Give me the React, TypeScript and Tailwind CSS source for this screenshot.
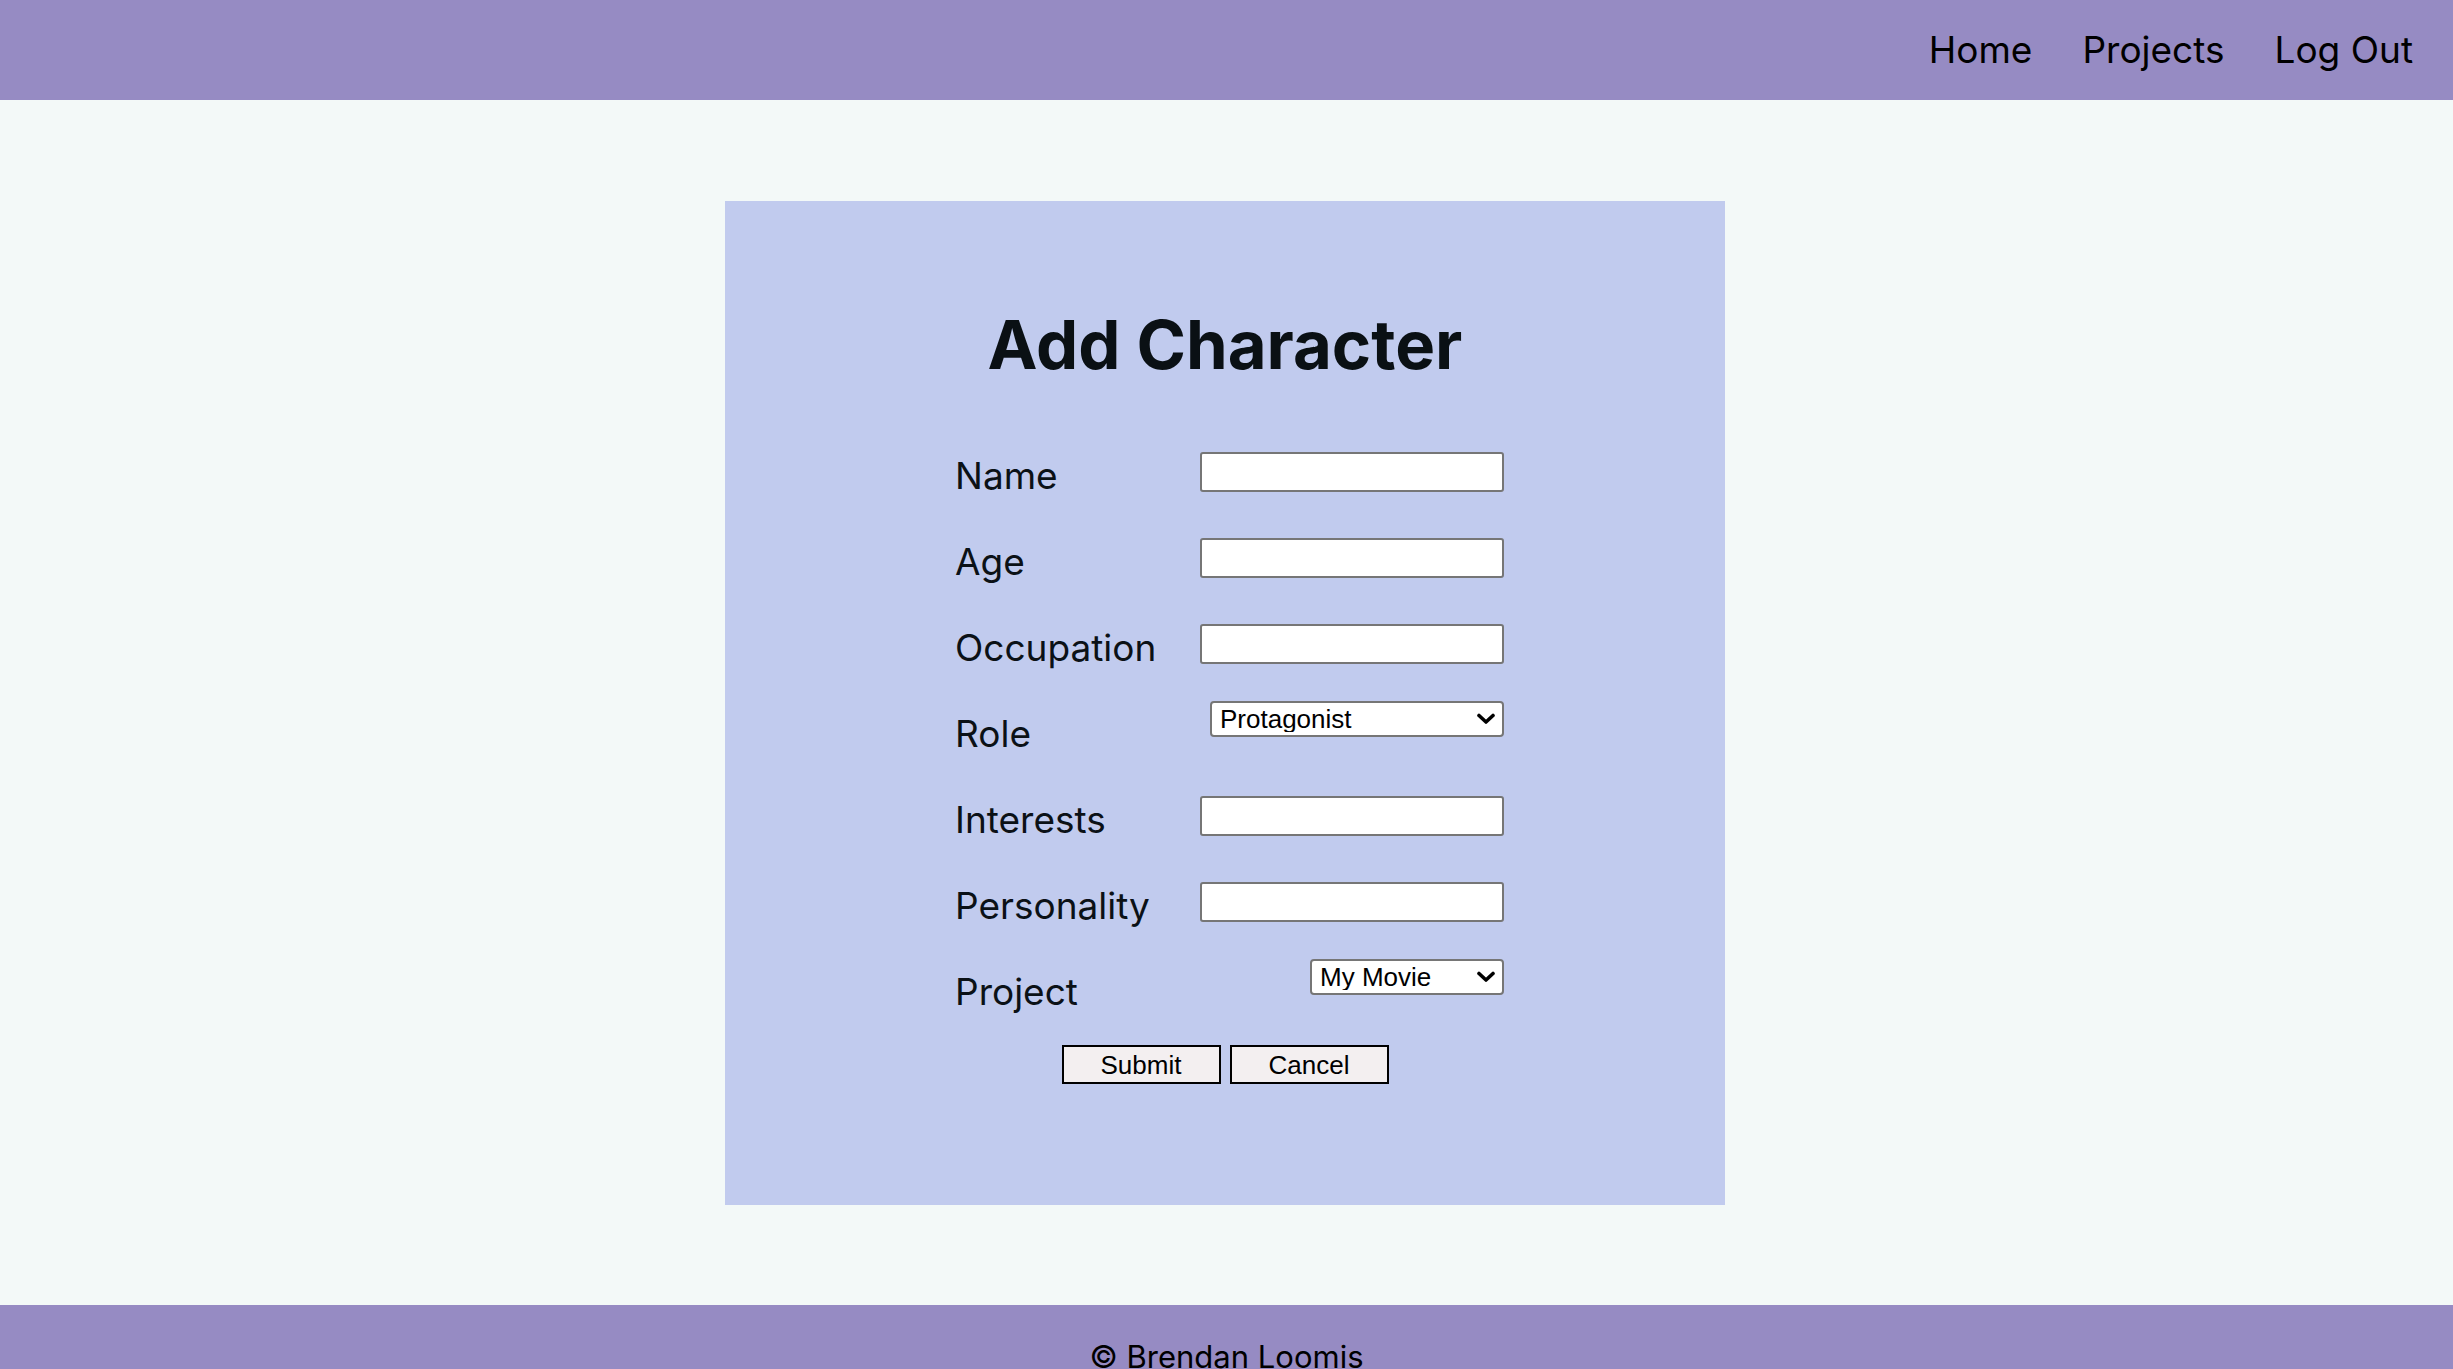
import React from "react";

const inter = { fontFamily: "Inter, 'Noto Sans', sans-serif" };

function Chevron() {
  return (
    <svg
      className="pointer-events-none absolute right-[9px] top-1/2 -translate-y-1/2"
      width="18"
      height="12"
      viewBox="0 0 18 12"
      fill="none"
    >
      <path d="M2 2.5 L9 9 L16 2.5" stroke="#000" strokeWidth="3.6" strokeLinecap="round" strokeLinejoin="round" />
    </svg>
  );
}

function Select({ value, width }: { value: string; width: string }) {
  return (
    <div className={`relative ${width} h-[36px]`}>
      <select
        defaultValue={value}
        className="h-full w-full appearance-none rounded-[4px] border-2 border-[#767676] bg-white pl-[8px] text-[26px] leading-none text-black outline-none font-['Liberation_Sans',Arial,sans-serif]"
      >
        <option>{value}</option>
      </select>
      <Chevron />
    </div>
  );
}

function Row({ label, children, inputTop }: { label: string; children: React.ReactNode; inputTop: boolean }) {
  return (
    <div className="flex h-[86px] items-start justify-between">
      <label className="mt-[14px] text-[37px] leading-none text-[#0b1116]" style={inter}>
        {label}
      </label>
      <div className={inputTop ? "mt-[9px]" : "mt-0"}>{children}</div>
    </div>
  );
}

function TextInput() {
  return (
    <input
      type="text"
      className="block h-[40px] w-[304px] rounded-[3px] border-2 border-[#767676] bg-white px-2 text-[26px] outline-none"
    />
  );
}

export default function App() {
  return (
    <div className="min-h-screen bg-[#f3f9f8]" style={inter}>
      <header className="flex h-[100px] items-center justify-end gap-[50px] bg-[#968bc3] pr-[40px]">
        <a className="-mt-[2px] text-[37px] leading-none text-black">Home</a>
        <a className="-mt-[2px] text-[37px] leading-none text-black">Projects</a>
        <a className="-mt-[2px] text-[37px] leading-none text-black">Log Out</a>
      </header>

      <main className="flex justify-center pt-[101px] pb-[100px]">
        <div className="-ml-[3px] flex h-[1004px] w-[1000px] flex-col bg-[#c1cbee]">
          <h1 className="mt-[110px] text-center text-[67px] font-bold leading-none text-[#0a1014]">
            Add Character
          </h1>
          <form className="ml-[230px] mt-[65px] w-[549px]" onSubmit={(e) => e.preventDefault()}>
            <Row label="Name" inputTop>
              <TextInput />
            </Row>
            <Row label="Age" inputTop>
              <TextInput />
            </Row>
            <Row label="Occupation" inputTop>
              <TextInput />
            </Row>
            <Row label="Role" inputTop={false}>
              <Select value="Protagonist" width="w-[294px]" />
            </Row>
            <Row label="Interests" inputTop>
              <TextInput />
            </Row>
            <Row label="Personality" inputTop>
              <TextInput />
            </Row>
            <Row label="Project" inputTop={false}>
              <Select value="My Movie" width="w-[194px]" />
            </Row>
          </form>
          <div className="flex justify-center gap-[9px]">
            <button className="h-[39px] w-[159px] border-2 border-black bg-[#f3eff0] text-[26px] leading-none text-black font-['Liberation_Sans',Arial,sans-serif]">
              Submit
            </button>
            <button className="h-[39px] w-[159px] border-2 border-black bg-[#f3eff0] text-[26px] leading-none text-black font-['Liberation_Sans',Arial,sans-serif]">
              Cancel
            </button>
          </div>
        </div>
      </main>

      <footer className="h-[100px] bg-[#968bc3] pt-[29px] text-center text-[31px] text-black">
        © Brendan Loomis
      </footer>
    </div>
  );
}
